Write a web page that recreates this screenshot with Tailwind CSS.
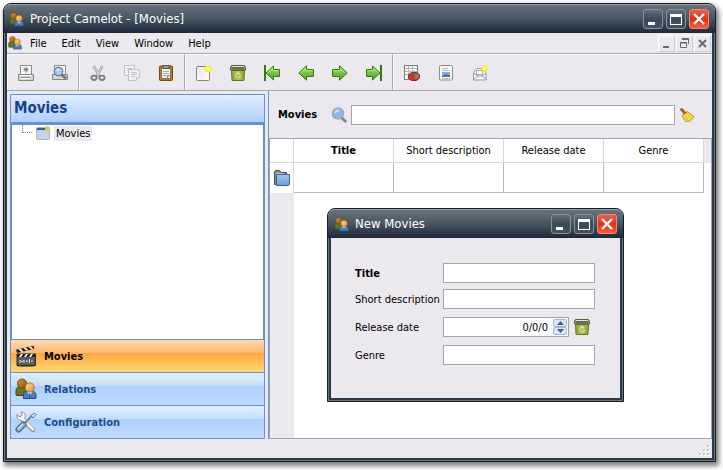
<!DOCTYPE html>
<html lang="en">
<head>
<meta charset="utf-8">
<meta name="viewport" content="width=device-width, initial-scale=1">
<title>Project Camelot - [Movies]</title>
<script src="https://cdn.jsdelivr.net/npm/@tailwindcss/browser@4"></script>
</head>
<body class="h-screen overflow-hidden bg-white pt-[3px] pr-[7px] pb-[8px] pl-[3px] font-['DejaVu_Sans_Condensed','DejaVu_Sans',sans-serif] text-[11px] leading-[15px] text-black">

<svg class="absolute h-0 w-0" aria-hidden="true">
  <defs>
    <linearGradient id="g-orange" x1="0" y1="0" x2="1" y2="1"><stop offset="0" stop-color="#ffdc9a"/><stop offset="1" stop-color="#e8902c"/></linearGradient>
    <linearGradient id="g-brown" x1="0" y1="0" x2="1" y2="1"><stop offset="0" stop-color="#dc9a45"/><stop offset="1" stop-color="#8f4f08"/></linearGradient>
    <linearGradient id="g-green" x1="0" y1="0" x2="0" y2="1"><stop offset="0" stop-color="#a6e26c"/><stop offset="1" stop-color="#41a51a"/></linearGradient>
    <linearGradient id="g-bin" x1="0" y1="0" x2="1" y2="0"><stop offset="0" stop-color="#8f9d38"/><stop offset=".5" stop-color="#b9c858"/><stop offset="1" stop-color="#8f9d38"/></linearGradient>
    <linearGradient id="g-folder" x1="0" y1="0" x2="0" y2="1"><stop offset="0" stop-color="#a4c8ee"/><stop offset="1" stop-color="#6c9dd3"/></linearGradient>
    <linearGradient id="g-paper" x1="0" y1="0" x2="1" y2="1"><stop offset="0" stop-color="#e6e6e6"/><stop offset="1" stop-color="#ffffff"/></linearGradient>
  </defs>
  <symbol id="people" viewBox="0 0 22 22">
    <path d="M1 17V12.500C1 9.500 3.500 8 7 8s5.500 2 5.500 5v4.500H1.500Z" fill="#66751f" stroke="#3f4a10"/>
    <circle cx="7" cy="5.500" r="4.500" fill="url(#g-brown)" stroke="#7a4506"/>
    <path d="M8.500 20.500V17c0-2.800 2.500-4.300 6-4.300s6.500 1.500 6.500 4.300v3.500Z" fill="#4b7fc4" stroke="#24508f"/>
    <path d="M12 13.500l2.800 4 2.700-4Z" fill="#fff"/><path d="M14.800 15v5" stroke="#24508f"/>
    <circle cx="14.800" cy="9.500" r="4.600" fill="url(#g-orange)" stroke="#bd7014"/>
  </symbol>
  <symbol id="bin" viewBox="0 0 16 16">
    <path d="M1.500 5.500h13l-.5 10H2Z" fill="url(#g-bin)" stroke="#66752a"/>
    <path d="M1.500.5h13l1 2v2.500H.5V2.500Z" fill="#8c9a4c" stroke="#55613a"/>
    <path d="M2 1.500h12" stroke="#e4e5e0"/><path d="M2 3h12" stroke="#55585a" stroke-width="1.500"/>
    <path d="M6 9.500l2-2 2 2M10.700 10.500l-1 2H8M5.300 10.500l1 2" fill="none" stroke="#dde6b4" stroke-width="1.200"/>
  </symbol>
  <symbol id="arrow" viewBox="0 0 16 16">
    <path d="M.8 8L8.500.8v3.700h7v7h-7v3.700Z" fill="url(#g-green)" stroke="#2f7d0c"/>
    <path d="M2.500 8l5-4.800v2.300h7" fill="none" stroke="#c4f09a" stroke-opacity=".7"/>
  </symbol>
  <symbol id="lens" viewBox="0 0 16 16">
    <path d="M11 11l3.300 3.300" stroke="#7f858c" stroke-width="2.800" stroke-linecap="round"/>
    <circle cx="7" cy="6.500" r="5.500" fill="#8dbbe9" stroke="#a3a8ae" stroke-width="1.500"/>
    <path d="M3.500 6.500A3.500 3.500 0 0 1 8 3c2 1-2 1.500-4.500 3.500Z" fill="#d3e8fb"/>
  </symbol>
  <symbol id="spark" viewBox="0 0 8 8">
    <circle cx="4" cy="4" r="3.600" fill="#f7ee35"/><circle cx="4" cy="4" r="1.700" fill="#fffbb5"/>
  </symbol>
</svg>

<div class="relative flex h-full flex-col rounded-t-lg border border-[#141c28] bg-[#66777f] px-px pb-px shadow-[2px_3px_5px_1px_rgba(0,0,0,0.5)]">
  <header class="-mx-px flex h-[29px] shrink-0 items-center rounded-t-[7px] border-t border-[#98a2a9] bg-linear-to-b from-[#66737e] from-0% via-[#4a5864] via-45% to-[#1e2839] to-100% pr-[6px] pl-[5px]">
    <svg class="mr-[6px] h-[15px] w-[15px]"><use href="#people"/></svg>
    <h1 class="grow text-[13px] leading-[18px] font-normal text-white">Project Camelot - [Movies]</h1>
    <div class="flex gap-[3px]">
      <button aria-label="Minimize" class="h-5 w-5 rounded-[3px] border border-[#85929c] bg-linear-to-b from-[#64717d] via-[#3b4857] to-[#455361]"><svg viewBox="0 0 18 18"><path d="M4 12h7v3H4Z" fill="#fff"/></svg></button>
      <button aria-label="Maximize" class="h-5 w-5 rounded-[3px] border border-[#85929c] bg-linear-to-b from-[#64717d] via-[#3b4857] to-[#455361]"><svg viewBox="0 0 18 18"><path d="M3 4h12v11H3Zm1 3v7h10V7Z" fill="#fff" fill-rule="evenodd"/></svg></button>
      <button aria-label="Close" class="h-5 w-5 rounded-[3px] border border-[#ef8877] bg-linear-to-b from-[#e9604b] via-[#e62c0d] to-[#fb5a35]"><svg viewBox="0 0 18 18"><path d="M4 4l10 10M14 4L4 14" stroke="#fff" stroke-width="2.400"/></svg></button>
    </div>
  </header>

  <div class="flex min-h-0 grow flex-col border-x-2 border-b-2 border-[#2b3949] bg-[#ebe9ed]">
    <nav class="flex h-5 shrink-0 items-center gap-[15px] pl-px" aria-label="Menu bar">
      <svg class="-mr-[7px] h-[14px] w-[14px]"><use href="#people"/></svg>
      <button>File</button>
      <button>Edit</button>
      <button>View</button>
      <button>Window</button>
      <button>Help</button>
      <div class="ml-auto flex gap-px pr-px">
        <button aria-label="Minimize document" class="h-[17px] w-[17px] border border-white border-r-[#d0ced4] border-b-[#d0ced4]"><svg viewBox="0 0 15 15"><path d="M4 10h6v2H4Z" fill="#6b6b63"/></svg></button>
        <button aria-label="Restore document" class="h-[17px] w-[17px] border border-white border-r-[#d0ced4] border-b-[#d0ced4]"><svg viewBox="0 0 15 15"><path d="M5 3.500h6.500V8M3.500 6.500h6v5h-6Z M3 7h7" fill="none" stroke="#6b6b63"/><path d="M5 3h7" stroke="#6b6b63" stroke-width="2"/></svg></button>
        <button aria-label="Close document" class="h-[17px] w-[17px] border border-white border-r-[#d0ced4] border-b-[#d0ced4]"><svg viewBox="0 0 15 15"><path d="M4 4l7 7M11 4l-7 7" stroke="#6b6b63" stroke-width="2"/></svg></button>
      </div>
    </nav>

    <div class="flex h-[38px] shrink-0 border-y border-[#a7a5aa]" role="toolbar" aria-label="Actions">
      <div class="flex border-t border-r border-l border-t-white border-r-[#a7a5aa] border-l-white px-px">
        <button aria-label="Print" class="grid w-[34px] place-items-center"><svg class="h-4 w-4" viewBox="0 0 16 16"><path d="M2.500 9V.5h11V9" fill="#fafafa" stroke="#8b8b8b"/><path d="M8 2v5.500M5.500 4.500h5M6 6.500l4-4M10 6.500l-4-4" fill="none" stroke="#777"/><path d="M.5 9.500h15v6H.5Z" fill="#d4d4d4" stroke="#858585"/><path d="M2 10.500h12M3 13.500h9" stroke="#fff"/><path d="M3 12.500h9" stroke="#8b8b8b"/></svg></button>
        <button aria-label="Print preview" class="grid w-[34px] place-items-center"><svg class="h-4 w-4" viewBox="0 0 16 16"><path d="M2.500 9V.5h11V9" fill="#fafafa" stroke="#8b8b8b"/><path d="M.5 9.500h15v5H.5Z" fill="#d4d4d4" stroke="#858585"/><path d="M9.500 9.500l4.500 4" stroke="#777" stroke-width="3"/><circle cx="6.500" cy="6.500" r="4.200" fill="#a9cdf0" stroke="#5e7f9f" stroke-width="1.300"/><path d="M4 6c1-3 4-2 4-1Z" fill="#eef7ff"/></svg></button>
      </div>
      <div class="flex border-t border-r border-l border-t-white border-r-[#a7a5aa] border-l-white px-px">
        <button aria-label="Cut" class="grid w-[34px] place-items-center"><svg class="h-4 w-4" viewBox="0 0 16 16"><path d="M3.500 1l6 10M12.500 1l-6 10" stroke="#a5a5a5" stroke-width="2.600"/><path d="M3.500 1l5.500 9M12.500 1L7 10" stroke="#e0e0e0"/><ellipse cx="4" cy="12.800" rx="2.600" ry="2.200" fill="none" stroke="#7c7c7c" stroke-width="1.800"/><ellipse cx="12" cy="12.800" rx="2.600" ry="2.200" fill="none" stroke="#7c7c7c" stroke-width="1.800"/></svg></button>
        <button aria-label="Copy" class="grid w-[34px] place-items-center"><svg class="h-4 w-4" viewBox="0 0 16 16" fill="#f1f0f2" stroke="#c4c3c6"><path d="M.5.5h10v10H.5Z"/><path d="M3 3.500h5M3 5.500h2"/><path d="M4.500 4.500h11v8l-3 3h-8Z"/><path d="M7 7.500h6M7 9.500h6M7 11.500h4M12.500 15v-2.500h3"/></svg></button>
        <button aria-label="Paste" class="grid w-[34px] place-items-center"><svg class="h-4 w-4" viewBox="0 0 16 16"><rect x="1.500" y="1" width="13" height="14.500" rx="1" fill="#bd771b" stroke="#7b4607"/><path d="M3.500 3.500h9V13.500h-9Z" fill="#f4f4ee" stroke="#777"/><path d="M5 .5h6v3H5Z" fill="#9c9c94" stroke="#54544d"/><path d="M5 6.500h6M5 8.500h6M5 10.500h4" stroke="#aaa"/><path d="M9.500 13.500v-3h3" fill="#ddd" stroke="#888"/></svg></button>
      </div>
      <div class="flex border-t border-r border-l border-t-white border-r-[#a7a5aa] border-l-white px-px">
        <button aria-label="New" class="grid w-[34px] place-items-center"><svg class="h-4 w-4" viewBox="0 0 16 16"><rect x=".5" y="1.500" width="13" height="14" rx="1" fill="url(#g-paper)" stroke="#858585"/><use href="#spark" x="8" y="0" width="8" height="8"/></svg></button>
        <button aria-label="Delete" class="grid w-[34px] place-items-center"><svg class="h-4 w-4"><use href="#bin"/></svg></button>
        <button aria-label="First" class="grid w-[34px] place-items-center"><svg class="h-4 w-4" viewBox="0 0 16 16"><path d="M1 0v16" stroke="#2f7d0c" stroke-width="2"/><path d="M2 8L9.500 1v3.500h6v7h-6V15Z" fill="url(#g-green)" stroke="#2f7d0c"/><path d="M3.500 8l5-4.500v2h6" fill="none" stroke="#c4f09a" stroke-opacity=".7"/></svg></button>
        <button aria-label="Previous" class="grid w-[34px] place-items-center"><svg class="h-4 w-4"><use href="#arrow"/></svg></button>
        <button aria-label="Next" class="grid w-[34px] place-items-center"><svg class="h-4 w-4 -scale-x-100"><use href="#arrow"/></svg></button>
        <button aria-label="Last" class="grid w-[34px] place-items-center"><svg class="h-4 w-4 -scale-x-100" viewBox="0 0 16 16"><path d="M1 0v16" stroke="#2f7d0c" stroke-width="2"/><path d="M2 8L9.500 1v3.500h6v7h-6V15Z" fill="url(#g-green)" stroke="#2f7d0c"/><path d="M3.500 8l5-4.500v2h6" fill="none" stroke="#c4f09a" stroke-opacity=".7"/></svg></button>
      </div>
      <div class="flex grow border-t border-l border-white px-px">
        <button aria-label="Export to spreadsheet" class="grid w-[34px] place-items-center"><svg class="h-4 w-4" viewBox="0 0 16 16"><rect x=".5" y=".5" width="13" height="14" fill="#f3f3f3" stroke="#7d7d7d"/><path d="M1 3.500h12M1 6.500h12M1 9.500h12M4.500 1v13M8.500 1v13" stroke="#b5b5b5"/><ellipse cx="10" cy="11.500" rx="5.700" ry="4.200" fill="#c23a2c" stroke="#8a2118"/><path d="M10 11V8.300c3 0 4.500 1 4.800 2.700Z" fill="#4a7fb5"/><path d="M10.500 12l3-2.500 1 2.500c-1 1.500-2 2-3 2Z" fill="#c9752f"/></svg></button>
        <button aria-label="Export to document" class="grid w-[34px] place-items-center"><svg class="h-4 w-4" viewBox="0 0 16 16"><rect x="1.500" y=".5" width="13" height="14.500" rx="1" fill="#fafafa" stroke="#8c8c8c"/><path d="M4 3.500h6M4 5.500h8M4 13.500h8" stroke="#bcbcbc"/><path d="M4 7h8v5H4Z" fill="#86ade0"/><path d="M4 11l3-2 5 1v2H4Z" fill="#4a72ab"/></svg></button>
        <button aria-label="Export to mail" class="grid w-[34px] place-items-center"><svg class="h-4 w-4" viewBox="0 0 16 16"><path d="M1.500 7.500L5 3.500h7l2 4v7.500H1.500Z" fill="#f7f7f7" stroke="#9c9c9c"/><path d="M4.500 5.500h6v4h-6Z" fill="#fff" stroke="#a5a5a5"/><path d="M2 8l4 3h4l4-3M2 14.500l4-4M14 14.500l-4-4" fill="none" stroke="#9c9c9c"/><use href="#spark" x="9" y="0" width="7" height="7"/></svg></button>
      </div>
    </div>

    <div class="flex min-h-0 grow">
      <aside class="mt-[3px] mr-[3px] ml-[3px] flex w-[255px] shrink-0 flex-col border border-[#6593cf]">
        <h2 class="flex h-[27px] shrink-0 items-center bg-linear-to-b from-[#e1edff] to-[#afd0ff] pl-[3px] text-[15px] leading-[19px] font-bold text-[#15428b]">Movies</h2>
        <div class="min-h-0 grow border border-t-3 border-[#6593cf] bg-white">
          <ul>
            <li class="flex h-4 items-center pl-[10px]">
              <span class="mb-[8px] h-2 w-[10px] border-b border-l border-dotted border-[#8d8d8d]"></span>
              <svg class="ml-[4px] h-[14px] w-[14px]" viewBox="0 0 14 14"><rect x=".5" y="1.500" width="13" height="12" rx="1" fill="#c8d4e6" stroke="#a7b2c4"/><path d="M1 3h10" stroke="#315f9f" stroke-width="2"/><circle cx="11.500" cy="2.500" r="2.500" fill="#cfd14f"/></svg>
              <button class="ml-[4px] bg-[#ebe9ed] px-[2px]">Movies</button>
            </li>
          </ul>
        </div>
        <button class="flex h-[33px] shrink-0 items-center border-b border-[#6593cf] bg-[linear-gradient(to_bottom,#ffdbb0_0%,#ffb873_40%,#ffa73f_41%,#ffd973_100%)] pl-[4px] font-bold">
          <svg class="mr-[7px] h-[22px] w-[22px]" viewBox="0 0 22 22"><ellipse cx="11" cy="21" rx="9" ry="1" fill="#8d7245"/><path d="M2 9h18.500v11.500H2Z" fill="#5b5d5a" stroke="#2b2d2a"/><path d="M2 9h18.500v3H2Z" fill="#222"/><path d="M4 12l2-3h2l-2 3ZM9 12l2-3h2l-2 3ZM14 12l2-3h2l-2 3Z" fill="#fff"/><path d="M1 4.800L18.500.8l.8 3.200L2 8Z" fill="#222"/><path d="M3.500 4.300l3 2.600 2-.5-3-2.600ZM8.500 3.100l3 2.600 2-.5-3-2.600ZM13.500 2l3 2.600 2-.5-3-2.600Z" fill="#fff"/><path d="M5 18v-3l2 2 2-2v3M11 17q1-3 2 0M14.500 14v4M17 15v2" fill="none" stroke="#d8d8d8"/></svg>
          Movies
        </button>
        <button class="flex h-[33px] shrink-0 items-center border-b border-[#6593cf] bg-[linear-gradient(to_bottom,#e3efff_0%,#c4ddff_40%,#add1ff_41%,#c0dbff_100%)] pl-[4px] font-bold text-[#204d89]">
          <svg class="mr-[7px] h-[22px] w-[22px]"><use href="#people"/></svg>
          Relations
        </button>
        <button class="flex h-[32px] shrink-0 items-center bg-[linear-gradient(to_bottom,#e3efff_0%,#c4ddff_40%,#add1ff_41%,#c0dbff_100%)] pl-[4px] font-bold text-[#204d89]">
          <svg class="mr-[7px] h-[22px] w-[22px]" viewBox="0 0 22 22"><path d="M7.500 8.500L18 19" stroke="#8b8f92" stroke-width="4.500" stroke-linecap="round"/><path d="M2 3.500l3 2.500 2-1.500L6.500 1c3 0 4.500 2.500 3.500 5.500L8 9c-4 1.500-6.500-1.500-6-5.500Z" fill="#f4f4f2" stroke="#8b8f92"/><path d="M7.500 8L18 18.500" stroke="#f4f4f2" stroke-width="2.800" stroke-linecap="round"/><path d="M9.500 12.500l7-7.500" stroke="#7c8791" stroke-width="2"/><path d="M16 4.500L19.500 2l1.500 1.500L18 7Z" fill="#dfe9f5" stroke="#54749c"/><path d="M3.500 18.500l5-5" stroke="#3e5878" stroke-width="6" stroke-linecap="round"/><path d="M3.500 18.500l5-5" stroke="#8fabc9" stroke-width="4" stroke-linecap="round"/><path d="M3.500 17.500l4-4" stroke="#e3eefa" stroke-width="1.200" stroke-linecap="round"/></svg>
          Configuration
        </button>
      </aside>

      <main class="flex min-w-0 grow flex-col border-l border-[#6593cf]">
        <form class="flex h-[47px] shrink-0 items-center pr-[17px] pl-[9px]">
          <label for="search" class="w-[53px] font-bold">Movies</label>
          <svg class="mr-[4px] h-4 w-4 shrink-0"><use href="#lens"/></svg>
          <input id="search" type="text" class="h-5 min-w-0 grow border border-[#a5a3a8] bg-white px-[3px]">
          <button type="button" aria-label="Clear search" class="ml-[4px] shrink-0"><svg class="h-4 w-4" viewBox="0 0 16 16"><path d="M2.500 2.500l2.500 2.500" stroke="#9a6426" stroke-width="3" stroke-linecap="round"/><path d="M3.500 8L8 4.500l6.500 4.500c0 3-2.500 5.500-7.500 5.500C5 13 4 11 3.500 8Z" fill="#f2dc45" stroke="#b89c1c"/><path d="M4 7.500L7.500 5" stroke="#c9402a" stroke-width="1.200"/><path d="M6.500 9l1.500 4M9 8l3 3.500" stroke="#d9bf2c"/></svg></button>
        </form>
        <div class="flex min-h-0 grow flex-col border border-[#a5a3a8] bg-[linear-gradient(to_right,#ebe9ed_24px,#ffffff_24px)]">
          <table class="w-full table-fixed border-separate border-spacing-0">
            <colgroup><col class="w-[24px]"><col class="w-[100px]"><col class="w-[110px]"><col class="w-[100px]"><col class="w-[100px]"><col></colgroup>
            <thead>
              <tr class="h-6 bg-white">
                <td class="border-r border-b border-[#d9d8db]"></td>
                <th scope="col" class="border-r border-b border-[#d9d8db] p-0 font-bold">Title</th>
                <th scope="col" class="border-r border-b border-[#d9d8db] p-0 font-normal whitespace-nowrap">Short description</th>
                <th scope="col" class="border-r border-b border-[#d9d8db] p-0 font-normal">Release date</th>
                <th scope="col" class="border-r border-b border-[#d9d8db] p-0 font-normal">Genre</th>
                <td class="bg-[#ebe9ed]"></td>
              </tr>
            </thead>
            <tbody>
              <tr class="h-[30px]">
                <th scope="row" class="border-r border-[#d9d8db] bg-white p-0"><button aria-label="Open record" class="block pl-[4px]"><svg class="h-4 w-4" viewBox="0 0 16 16"><path d="M.5 14.500V1.500l1-1h4l1.500 2h5.500v12Z" fill="#8b8f89" stroke="#4d504b"/><path d="M2 3.500h8" stroke="#c9ccc6"/><path d="M2.500 4.500h13v10l-1 1H2.500Z" fill="url(#g-folder)" stroke="#2e619f"/></svg></button></th>
                <td class="border-r border-b border-[#b9b8bb]"></td>
                <td class="border-r border-b border-[#b9b8bb]"></td>
                <td class="border-r border-b border-[#b9b8bb]"></td>
                <td class="border-r border-b border-[#b9b8bb]"></td>
                <td></td>
              </tr>
            </tbody>
          </table>
        </div>
      </main>
    </div>

    <footer class="flex h-[19px] shrink-0 items-end justify-end p-px">
      <svg class="h-3 w-3" viewBox="0 0 12 12"><path d="M9 1h2v2H9ZM5 5h2v2H5ZM9 5h2v2H9ZM1 9h2v2H1ZM5 9h2v2H5ZM9 9h2v2H9Z" fill="#fff"/><path d="M8 0h2v2H8ZM4 4h2v2H4ZM8 4h2v2H8ZM0 8h2v2H0ZM4 8h2v2H4ZM8 8h2v2H8Z" fill="#c9c5cc"/></svg>
    </footer>
  </div>

  <section role="dialog" aria-labelledby="dialog-title" class="absolute top-[204px] left-[323px] flex w-[297px] flex-col rounded-t-lg border border-[#141c28] bg-[#66777f] px-px pb-px">
    <header class="-mx-px flex h-[29px] shrink-0 items-center rounded-t-[7px] border-t border-[#98a2a9] bg-linear-to-b from-[#66737e] from-0% via-[#4a5864] via-45% to-[#1e2839] to-100% pr-[6px] pl-[6px]">
      <svg class="mr-[6px] h-[15px] w-[15px]"><use href="#people"/></svg>
      <h2 id="dialog-title" class="grow text-[13px] leading-[18px] font-normal text-white">New Movies</h2>
      <div class="flex gap-[3px]">
        <button aria-label="Minimize dialog" class="h-5 w-5 rounded-[3px] border border-[#85929c] bg-linear-to-b from-[#64717d] via-[#3b4857] to-[#455361]"><svg viewBox="0 0 18 18"><path d="M4 12h7v3H4Z" fill="#fff"/></svg></button>
        <button aria-label="Maximize dialog" class="h-5 w-5 rounded-[3px] border border-[#85929c] bg-linear-to-b from-[#64717d] via-[#3b4857] to-[#455361]"><svg viewBox="0 0 18 18"><path d="M3 4h12v11H3Zm1 3v7h10V7Z" fill="#fff" fill-rule="evenodd"/></svg></button>
        <button aria-label="Close dialog" class="h-5 w-5 rounded-[3px] border border-[#ef8877] bg-linear-to-b from-[#e9604b] via-[#e62c0d] to-[#fb5a35]"><svg viewBox="0 0 18 18"><path d="M4 4l10 10M14 4L4 14" stroke="#fff" stroke-width="2.400"/></svg></button>
      </div>
    </header>
    <form class="grid grid-cols-[88px_minmax(0,1fr)] items-center gap-y-[6px] border-x-2 border-b-2 border-[#2b3949] bg-[#ebe9ed] pt-[25px] pr-[25px] pb-[33px] pl-[24px]">
      <label for="title" class="font-bold">Title</label>
      <input id="title" type="text" class="h-5 w-full border border-[#a5a3a8] bg-white px-[3px]">
      <label for="description" class="whitespace-nowrap">Short description</label>
      <input id="description" type="text" class="h-5 w-full border border-[#a5a3a8] bg-white px-[3px]">
      <label for="release">Release date</label>
      <div class="flex h-6 items-center">
        <div class="flex h-5 min-w-0 grow items-center border border-[#a5a3a8] bg-white pr-px">
          <input id="release" type="text" value="0/0/0" class="w-0 min-w-0 grow bg-transparent pr-[5px] text-right outline-none">
          <div class="flex w-[14px] shrink-0 flex-col">
            <button type="button" aria-label="Later date" class="grid h-2 place-items-center rounded-[2px] border border-[#9db7d8] bg-[#dce8f7]"><svg class="h-1 w-[7px]" viewBox="0 0 7 4"><path d="M0 4l3.500-4L7 4Z" fill="#4c5a75"/></svg></button>
            <button type="button" aria-label="Earlier date" class="grid h-2 place-items-center rounded-[2px] border border-[#9db7d8] bg-[#dce8f7]"><svg class="h-1 w-[7px]" viewBox="0 0 7 4"><path d="M0 0l3.500 4L7 0Z" fill="#4c5a75"/></svg></button>
          </div>
        </div>
        <button type="button" aria-label="Clear release date" class="mr-[5px] ml-[5px] shrink-0"><svg class="h-4 w-4"><use href="#bin"/></svg></button>
      </div>
      <label for="genre">Genre</label>
      <input id="genre" type="text" class="h-5 w-full border border-[#a5a3a8] bg-white px-[3px]">
    </form>
  </section>
</div>
</body>
</html>
